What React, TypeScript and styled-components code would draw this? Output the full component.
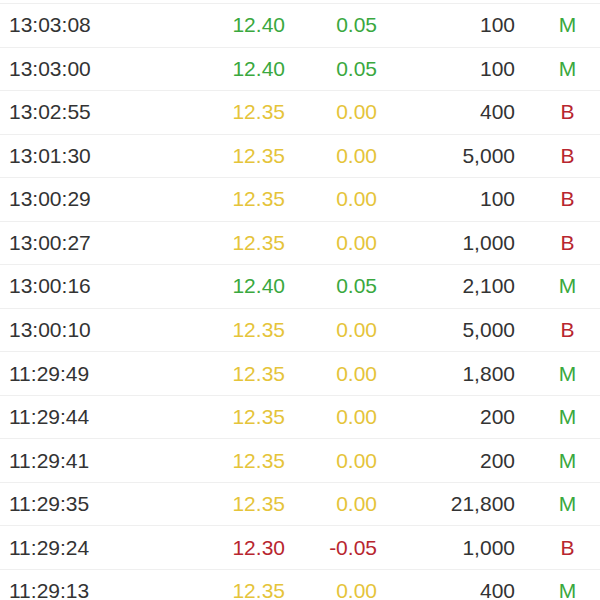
import React from 'react';
import styled, { createGlobalStyle } from 'styled-components';

type Side = 'M' | 'B';
type Tone = 'up' | 'flat' | 'down';

type Trade = {
	time: string;
	price: string;
	change: string;
	volume: string;
	side: Side;
	tone: Tone;
};

const trades: Trade[] = [
	{ time: '13:03:08', price: '12.40', change: '0.05', volume: '100', side: 'M', tone: 'up' },
	{ time: '13:03:00', price: '12.40', change: '0.05', volume: '100', side: 'M', tone: 'up' },
	{ time: '13:02:55', price: '12.35', change: '0.00', volume: '400', side: 'B', tone: 'flat' },
	{ time: '13:01:30', price: '12.35', change: '0.00', volume: '5,000', side: 'B', tone: 'flat' },
	{ time: '13:00:29', price: '12.35', change: '0.00', volume: '100', side: 'B', tone: 'flat' },
	{ time: '13:00:27', price: '12.35', change: '0.00', volume: '1,000', side: 'B', tone: 'flat' },
	{ time: '13:00:16', price: '12.40', change: '0.05', volume: '2,100', side: 'M', tone: 'up' },
	{ time: '13:00:10', price: '12.35', change: '0.00', volume: '5,000', side: 'B', tone: 'flat' },
	{ time: '11:29:49', price: '12.35', change: '0.00', volume: '1,800', side: 'M', tone: 'flat' },
	{ time: '11:29:44', price: '12.35', change: '0.00', volume: '200', side: 'M', tone: 'flat' },
	{ time: '11:29:41', price: '12.35', change: '0.00', volume: '200', side: 'M', tone: 'flat' },
	{ time: '11:29:35', price: '12.35', change: '0.00', volume: '21,800', side: 'M', tone: 'flat' },
	{ time: '11:29:24', price: '12.30', change: '-0.05', volume: '1,000', side: 'B', tone: 'down' },
	{ time: '11:29:13', price: '12.35', change: '0.00', volume: '400', side: 'M', tone: 'flat' },
];

const toneColors: Record<Tone, string> = {
	up: '#3aa83e',
	flat: '#e5c43a',
	down: '#b8262f',
};

const sideColors: Record<Side, string> = {
	M: '#3aa83e',
	B: '#b8262f',
};

const GlobalStyle = createGlobalStyle`
	html, body {
		margin: 0;
		padding: 0;
		background: #ffffff;
		overflow: hidden;
	}

	body {
		font-family: 'Liberation Sans', Arial, Helvetica, sans-serif;
		-webkit-font-smoothing: antialiased;
	}
`;

export default function App() {
	return (
		<>
			<GlobalStyle />
			<List>
				{trades.map((trade) => (
					<Row key={trade.time}>
						<Time>{trade.time}</Time>
						<Num $tone={trade.tone}>{trade.price}</Num>
						<Num $tone={trade.tone}>{trade.change}</Num>
						<Volume>{trade.volume}</Volume>
						<SideMark $side={trade.side}>{trade.side}</SideMark>
					</Row>
				))}
			</List>
		</>
	);
}

const List = styled.div`
	display: flex;
	flex-direction: column;

	padding-top: 3px;
	height: 597px;
	overflow: hidden;
`;

const Row = styled.div`
	display: grid;
	grid-template-columns: 176px 100px 92px 138px 85px;
	align-items: center;
	flex: 0 0 43.54px;

	box-sizing: border-box;
	border-top: 1px solid #efefef;
	padding-left: 9px;

	font-size: 21px;
	color: #333333;
`;

const Time = styled.span`
	text-align: left;
`;

const Num = styled.span<{ $tone: Tone }>`
	text-align: right;
	color: ${({ $tone }) => toneColors[$tone]};
`;

const Volume = styled.span`
	text-align: right;
`;

const SideMark = styled.span<{ $side: Side }>`
	text-align: center;
	padding-left: 20px;
	color: ${({ $side }) => sideColors[$side]};
`;
